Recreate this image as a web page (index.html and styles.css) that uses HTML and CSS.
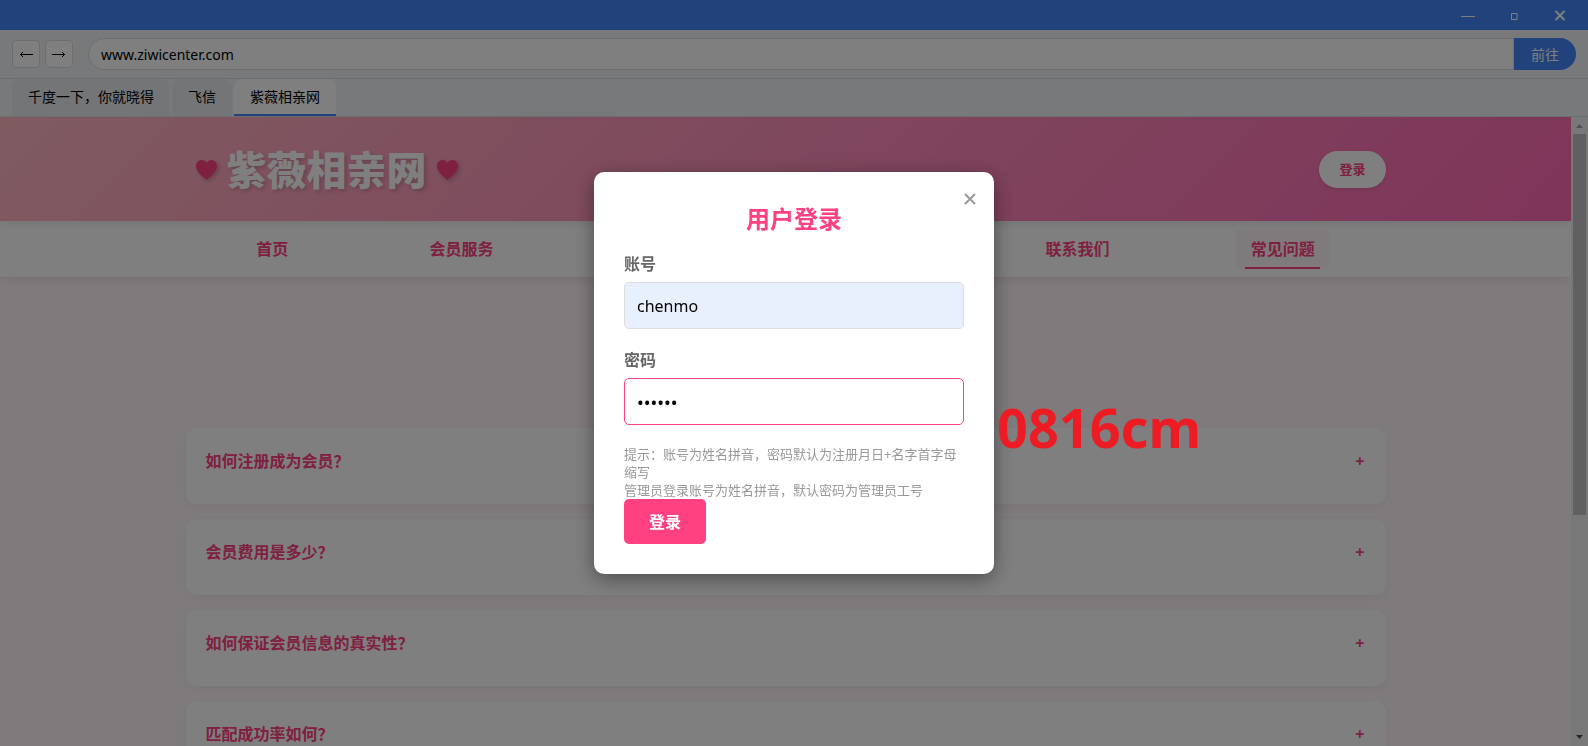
FILE: index.html
```html
<!DOCTYPE html>
<html lang="zh-CN">

<head>
    <meta charset="UTF-8">
    <meta name="viewport" content="width=device-width, initial-scale=1.0">
    <title>紫薇相亲网</title>
    <link rel="stylesheet" href="styles.css">
</head>

<body>

    <div class="browser">
        <!-- 窗口标题栏 -->
        <div class="title-bar">
            <button type="button" class="window-btn" aria-label="最小化">
                <svg width="14" height="14" viewBox="0 0 14 14"><path d="M0 8.5h14" /></svg>
            </button>
            <button type="button" class="window-btn" aria-label="最大化">
                <svg width="14" height="14" viewBox="0 0 14 14"><path d="M4.5 5.5h5.500v6h-5.500z" /></svg>
            </button>
            <button type="button" class="window-btn window-close" aria-label="关闭">
                <svg width="14" height="14" viewBox="0 0 14 14"><path d="M2.5 3l9 9M11.5 3l-9 9" /></svg>
            </button>
        </div>

        <!-- 地址栏 -->
        <form class="toolbar">
            <button type="button" class="nav-btn" aria-label="后退">
                <svg width="14" height="8" viewBox="0 0 14 8"><path d="M14 4.500H1M4 2L1.500 4.500L4 7" /></svg>
            </button>
            <button type="button" class="nav-btn" aria-label="前进">
                <svg width="14" height="8" viewBox="0 0 14 8"><path d="M0 4.500h13M10 2l2.500 2.500L10 7" /></svg>
            </button>
            <input type="text" class="url-input" aria-label="网址" value="www.ziwicenter.com">
            <button type="button" class="go-btn">前往</button>
        </form>

        <!-- 标签页 -->
        <div class="tabs">
            <button type="button" class="tab">千度一下，你就晓得</button>
            <button type="button" class="tab">飞信</button>
            <button type="button" class="tab active">紫薇相亲网</button>
        </div>

        <div class="viewport">
            <div class="page">
                <header>
                    <div class="container header-content">
                        <h1 class="logo">
                            <svg class="heart" viewBox="0 0 21 20"><path d="M10.5 20C7 16.8 0 12.2 0 6 0 2.4 2.4 0 5.5 0c2.200 0 4 1.200 5 3 1-1.800 2.800-3 5-3C18.600 0 21 2.400 21 6c0 6.200-7 10.800-10.500 14z" /></svg>
                            紫薇相亲网
                            <svg class="heart" viewBox="0 0 21 20"><path d="M10.5 20C7 16.8 0 12.2 0 6 0 2.4 2.4 0 5.5 0c2.200 0 4 1.200 5 3 1-1.800 2.800-3 5-3C18.600 0 21 2.400 21 6c0 6.200-7 10.800-10.500 14z" /></svg>
                        </h1>
                        <button type="button" class="login-btn">登录</button>
                    </div>
                </header>

                <nav>
                    <ul class="container">
                        <li><a href="#">首页</a></li>
                        <li><a href="#">会员服务</a></li>
                        <li class="blank"></li>
                        <li class="blank"></li>
                        <li><a href="#">联系我们</a></li>
                        <li><a href="#" class="active">常见问题</a></li>
                    </ul>
                </nav>

                <main class="container faq">
                    <button type="button" class="faq-item"><span>如何注册成为会员？</span><span>+</span></button>
                    <button type="button" class="faq-item"><span>会员费用是多少？</span><span>+</span></button>
                    <button type="button" class="faq-item"><span>如何保证会员信息的真实性？</span><span>+</span></button>
                    <button type="button" class="faq-item"><span>匹配成功率如何？</span><span>+</span></button>
                </main>
            </div>

            <div class="scrollbar">
                <svg class="arrow-up" viewBox="0 0 17 17"><path d="M8.500 7L12 11H5z" /></svg>
                <div class="track"><div class="thumb"></div></div>
                <svg class="arrow-down" viewBox="0 0 17 17"><path d="M8.500 10L12 6H5z" /></svg>
            </div>
        </div>
    </div>

    <!-- 登录弹窗 -->
    <div class="modal">
        <div class="modal-content">
            <button type="button" class="close" aria-label="关闭">
                <svg width="12" height="12" viewBox="0 0 12 12"><path d="M1 1l10 10M11 1L1 11" /></svg>
            </button>
            <h2>用户登录</h2>
            <form>
                <div class="form-group">
                    <label for="username">账号</label>
                    <input type="text" id="username" class="autofilled" value="chenmo">
                </div>
                <div class="form-group">
                    <label for="password">密码</label>
                    <input type="password" id="password" class="focused" value="0816cm">
                </div>
                <p class="hint">提示：账号为姓名拼音，密码默认为注册月日+名字首字母缩写<br>管理员登录账号为姓名拼音，默认密码为管理员工号</p>
                <button type="button" class="submit-btn">登录</button>
            </form>
            <span class="note">0816cm</span>
        </div>
    </div>

</body>

</html>
```

FILE: styles.css
```css
* {
    margin: 0;
    padding: 0;
    box-sizing: border-box;
}

body {
    font-family: "Noto Sans", "Noto Sans CJK SC", sans-serif;
    color: #333;
    overflow: hidden;
}

button,
input {
    font-family: inherit;
    border: none;
}

button {
    cursor: pointer;
}

svg {
    display: block;
}

.browser {
    display: flex;
    flex-direction: column;
    height: 100vh;
}

/* 标题栏 */
.title-bar {
    display: flex;
    justify-content: flex-end;
    flex-shrink: 0;
    height: 30px;
    padding-right: 5px;
    background-color: #4285f4;
}

.window-btn {
    display: flex;
    justify-content: center;
    align-items: center;
    width: 46px;
    background: none;
}

.window-btn svg {
    fill: none;
    stroke: #fff;
}

.window-close svg {
    stroke-width: 2;
}

/* 地址栏 */
.toolbar {
    display: flex;
    align-items: center;
    flex-shrink: 0;
    padding: 8px 12px;
    background-color: #f1f3f4;
    border-bottom: 1px solid #dadce0;
}

.nav-btn {
    display: flex;
    justify-content: center;
    align-items: center;
    width: 28px;
    height: 28px;
    margin-right: 5px;
    background-color: #fff;
    border: 1px solid #dadce0;
    border-radius: 4px;
}

.nav-btn svg {
    fill: none;
    stroke: #000;
}

.url-input {
    flex: 1;
    height: 32px;
    margin-left: 10px;
    padding: 0 12px;
    font-size: 14px;
    color: #000;
    background-color: #fff;
    border: 1px solid #dadce0;
    border-radius: 16px 0 0 16px;
}

.go-btn {
    height: 32px;
    padding: 0 17px;
    font-size: 14px;
    color: #fff;
    background-color: #4285f4;
    border-radius: 0 16px 16px 0;
}

/* 标签页 */
.tabs {
    display: flex;
    gap: 2px;
    flex-shrink: 0;
    height: 38px;
    padding: 0 12px;
    background-color: #f1f3f4;
    border-bottom: 1px solid #dadce0;
}

.tab {
    padding: 0 16px 2px;
    font-size: 14px;
    color: #000;
    background-color: #e8eaed;
    border-bottom: 2px solid #e8eaed;
    border-radius: 8px 8px 0 0;
}

.tab.active {
    background-color: #fff;
    border-bottom-color: #4285f4;
}

/* 网页内容 */
.viewport {
    display: flex;
    flex: 1;
    min-height: 0;
}

.page {
    flex: 1;
    overflow: hidden;
    background-color: #fff5f7;
}

.container {
    max-width: 1200px;
    margin: 0 auto;
}

header {
    position: relative;
    z-index: 2;
    padding: 22px 0;
    background: linear-gradient(135deg, #ffb6c1, #ff69b4);
    box-shadow: 0 2px 10px rgba(0, 0, 0, 0.1);
}

.header-content {
    display: flex;
    justify-content: space-between;
    align-items: center;
}

.logo {
    display: flex;
    align-items: center;
    gap: 10px;
    padding: 2px 10px 0;
    font-size: 40px;
    font-weight: 900;
    line-height: 58px;
    color: #fff;
    text-shadow: 2px 2px 4px rgba(0, 0, 0, 0.2);
}

.heart {
    width: 21px;
    height: 20px;
    fill: #ff4081;
    filter: drop-shadow(2px 2px 2px rgba(0, 0, 0, 0.2));
}

.login-btn {
    height: 37px;
    padding: 0 20px 2px;
    font-size: 13px;
    font-weight: bold;
    color: #ff4081;
    background-color: #fff;
    border-radius: 20px;
    box-shadow: 0 2px 5px rgba(0, 0, 0, 0.1);
}

nav {
    position: relative;
    z-index: 1;
    background-color: #fff;
    box-shadow: 0 2px 10px rgba(0, 0, 0, 0.1);
}

nav ul {
    display: flex;
    justify-content: space-around;
    align-items: center;
    height: 56px;
    list-style: none;
}

nav .blank {
    width: 94px;
}

nav a {
    display: block;
    position: relative;
    padding: 8px 15px;
    font-size: 16px;
    font-weight: bold;
    line-height: 24px;
    color: #ff4081;
    text-decoration: none;
    border-radius: 5px;
}

nav a.active {
    background-color: #fff5f7;
}

nav a.active::after {
    content: "";
    position: absolute;
    bottom: 0;
    left: 10%;
    width: 80%;
    height: 2px;
    background-color: #ff4081;
}

.faq {
    display: flex;
    flex-direction: column;
    gap: 15px;
    padding-top: 151px;
}

.faq-item {
    display: flex;
    justify-content: space-between;
    height: 76px;
    padding: 21px;
    padding-left: 20px;
    font-size: 16px;
    font-weight: bold;
    line-height: 24px;
    color: #ff4081;
    background-color: #fff;
    border-radius: 10px;
    box-shadow: 0 3px 10px rgba(0, 0, 0, 0.05);
}

/* 滚动条 */
.scrollbar {
    display: flex;
    flex-direction: column;
    width: 17px;
    background-color: #f1f1f1;
}

.scrollbar svg {
    width: 17px;
    height: 17px;
}

.arrow-up {
    fill: #a3a3a3;
}

.arrow-down {
    fill: #505050;
}

.track {
    flex: 1;
    padding: 0 2px;
}

.thumb {
    height: 64%;
    background-color: #c1c1c1;
}

/* 弹窗 */
.modal {
    display: flex;
    justify-content: center;
    align-items: center;
    position: fixed;
    inset: 0;
    z-index: 1000;
    background-color: rgba(0, 0, 0, 0.5);
}

.modal-content {
    position: relative;
    width: 400px;
    padding: 30px;
    background-color: #fff;
    border-radius: 10px;
    box-shadow: 0 5px 20px rgba(0, 0, 0, 0.4);
}

.close {
    position: absolute;
    top: 15px;
    right: 12px;
    padding: 6px;
    background: none;
}

.close svg {
    fill: none;
    stroke: #999;
    stroke-width: 2;
}

.modal-content h2 {
    margin-bottom: 18px;
    font-size: 24px;
    line-height: 33px;
    text-align: center;
    color: #ff4081;
}

.form-group {
    margin-bottom: 20px;
}

.form-group label {
    display: block;
    margin-bottom: 6px;
    font-size: 16px;
    font-weight: bold;
    line-height: 23px;
    color: #666;
}

.form-group input {
    display: block;
    width: 100%;
    height: 47px;
    padding: 0 12px;
    font-size: 16px;
    color: #000;
    border: 1px solid #ddd;
    border-radius: 5px;
}

.form-group .autofilled {
    background-color: #e8f0fe;
}

.form-group .focused {
    font-size: 18px;
    border-color: #ff4081;
}

.hint {
    font-size: 13px;
    line-height: 18px;
    color: #999;
}

.submit-btn {
    display: block;
    height: 45px;
    padding: 0 25px 2px;
    font-size: 16px;
    font-weight: bold;
    color: #fff;
    background-color: #ff4081;
    border-radius: 5px;
}

.note {
    position: absolute;
    top: 219px;
    left: 403px;
    font-size: 54px;
    font-weight: bold;
    line-height: 72px;
    color: #ed1c24;
}
```
